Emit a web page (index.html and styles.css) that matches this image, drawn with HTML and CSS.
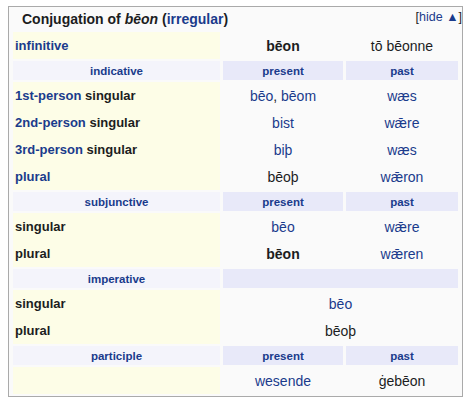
FILE: index.html
```html
<!DOCTYPE html>
<html>
<head>
<meta charset="utf-8">
<link rel="stylesheet" href="styles.css">
</head>
<body>
<div class="navframe">
  <div class="navhead">
    <span class="toggle">[<a class="lnk">hide ▲</a>]</span>
    Conjugation of <i>bēon</i> (<a class="lnk">irregular</a>)
  </div>
  <table class="conj">
    <colgroup><col class="c1"><col class="c2"><col class="c3"></colgroup>
    <tr class="data">
      <th class="lab"><a class="lnk">infinitive</a></th>
      <td><b>bēon</b></td>
      <td>tō bēonne</td>
    </tr>
    <tr class="head">
      <th class="hl"><a class="lnk">indicative</a></th>
      <th class="hc"><a class="lnk">present</a></th>
      <th class="hc"><a class="lnk">past</a></th>
    </tr>
    <tr class="data">
      <th class="lab"><a class="lnk">1st-person</a> singular</th>
      <td><a class="lnk">bēo</a>, <a class="lnk">bēom</a></td>
      <td><a class="lnk">wæs</a></td>
    </tr>
    <tr class="data">
      <th class="lab"><a class="lnk">2nd-person</a> singular</th>
      <td><a class="lnk">bist</a></td>
      <td><a class="lnk">wǣre</a></td>
    </tr>
    <tr class="data">
      <th class="lab"><a class="lnk">3rd-person</a> singular</th>
      <td><a class="lnk">biþ</a></td>
      <td><a class="lnk">wæs</a></td>
    </tr>
    <tr class="data">
      <th class="lab"><a class="lnk">plural</a></th>
      <td>bēoþ</td>
      <td><a class="lnk">wǣron</a></td>
    </tr>
    <tr class="head">
      <th class="hl"><a class="lnk">subjunctive</a></th>
      <th class="hc"><a class="lnk">present</a></th>
      <th class="hc"><a class="lnk">past</a></th>
    </tr>
    <tr class="data">
      <th class="lab">singular</th>
      <td><a class="lnk">bēo</a></td>
      <td><a class="lnk">wǣre</a></td>
    </tr>
    <tr class="data">
      <th class="lab">plural</th>
      <td><b>bēon</b></td>
      <td><a class="lnk">wǣren</a></td>
    </tr>
    <tr class="head">
      <th class="hl"><a class="lnk">imperative</a></th>
      <th class="hc" colspan="2"></th>
    </tr>
    <tr class="data">
      <th class="lab">singular</th>
      <td colspan="2"><a class="lnk">bēo</a></td>
    </tr>
    <tr class="data">
      <th class="lab">plural</th>
      <td colspan="2">bēoþ</td>
    </tr>
    <tr class="head">
      <th class="hl"><a class="lnk">participle</a></th>
      <th class="hc"><a class="lnk">present</a></th>
      <th class="hc"><a class="lnk">past</a></th>
    </tr>
    <tr class="data">
      <th class="lab"></th>
      <td><a class="lnk">wesende</a></td>
      <td>ġebēon</td>
    </tr>
  </table>
</div>
</body>
</html>
```
FILE: styles.css
```css
html, body {
  margin: 0;
  padding: 0;
  background: #ffffff;
}
body {
  padding: 6px 8px;
  font-family: "Liberation Sans", Arial, sans-serif;
  color: #1c1d1e;
}
.navframe {
  width: 453px;
  border: 1px solid #aaaaaa;
  background: #fafafa;
  padding-bottom: 2px;
}
.navhead {
  height: 25px;
  line-height: 24px;
  padding-left: 13px;
  font-size: 14px;
  font-weight: bold;
}
.navhead i {
  font-style: italic;
}
.toggle {
  float: right;
  font-size: 12.5px;
  font-weight: normal;
  line-height: 20px;
}
.lnk {
  color: #1a3b8c;
  text-decoration: none;
}
.conj {
  margin: 0 1px;
  width: 451px;
  table-layout: fixed;
  border-collapse: separate;
  border-spacing: 3px 0;
}
.c1 { width: 207px; }
.c2 { width: 120px; }
.c3 { width: 112px; }
.conj th, .conj td {
  padding: 0;
  vertical-align: middle;
}
.data th, .data td {
  height: 27px;
}
.head th {
  height: 19px;
  border-top: 2px solid transparent;
  border-bottom: 2px solid transparent;
  background-clip: padding-box;
}
.lab {
  text-align: left;
  padding-left: 2px !important;
  background: #fdfde7;
  font-size: 13px;
  font-weight: bold;
}
.conj td {
  text-align: center;
  font-size: 14px;
}
.hl {
  background-color: #f4f4fb;
  font-size: 11.5px;
  font-weight: bold;
  text-align: center;
}
.hc {
  background-color: #e8e9f9;
  font-size: 11.5px;
  font-weight: bold;
  text-align: center;
}
```
